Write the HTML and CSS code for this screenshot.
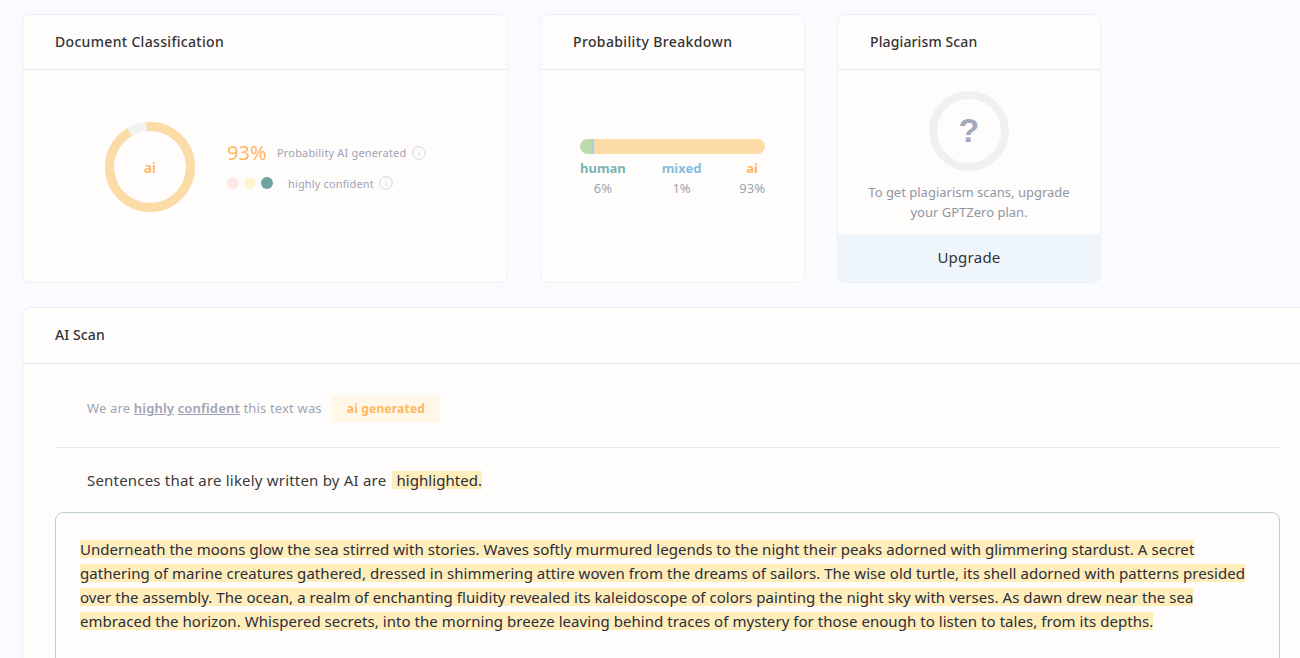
FILE: index.html
```html
<!DOCTYPE html>
<html lang="en">
<head>
<meta charset="utf-8">
<title>GPTZero scan results</title>
<link rel="stylesheet" href="styles.css">
</head>
<body>
<main class="page">
  <section class="top-row">
    <article class="card card-class">
      <h2 class="card-head">Document Classification</h2>
      <div class="class-body">
        <div class="donut">
          <svg width="90" height="90" viewBox="0 0 90 90">
            <circle class="donut-rest" cx="45" cy="45" r="40.5"/>
            <circle class="donut-ai" cx="45" cy="45" r="40.5" pathLength="100" stroke-dasharray="93 7" transform="rotate(-95 45 45)"/>
          </svg>
          <span class="donut-label">ai</span>
        </div>
        <div class="class-info">
          <div class="prob-row">
            <span class="prob-num">93%</span>
            <span class="prob-text">Probability AI generated</span>
            <svg class="info" width="14" height="14" viewBox="0 0 14 14"><circle cx="7" cy="7" r="6.3" /><path d="M7 6.2v4M7 3.6v1.2"/></svg>
          </div>
          <div class="conf-row">
            <span class="dot dot-red"></span>
            <span class="dot dot-yellow"></span>
            <span class="dot dot-green"></span>
            <span class="conf-text">highly confident</span>
            <svg class="info info-conf" width="14" height="14" viewBox="0 0 14 14"><circle cx="7" cy="7" r="6.3" /><path d="M7 6.2v4M7 3.6v1.2"/></svg>
          </div>
        </div>
      </div>
    </article>

    <article class="card card-prob">
      <h2 class="card-head">Probability Breakdown</h2>
      <div class="prob-body">
        <div class="bar">
          <span class="bar-human"></span><span class="bar-mixed"></span><span class="bar-ai"></span>
        </div>
        <div class="legend">
          <div class="legend-col"><b class="c-human">human</b><span>6%</span></div>
          <div class="legend-col legend-mid"><b class="c-mixed">mixed</b><span>1%</span></div>
          <div class="legend-col"><b class="c-ai">ai</b><span>93%</span></div>
        </div>
      </div>
    </article>

    <article class="card card-plag">
      <h2 class="card-head">Plagiarism Scan</h2>
      <div class="plag-body">
        <div class="ring">?</div>
        <p class="plag-text">To get plagiarism scans, upgrade<br>your GPTZero plan.</p>
      </div>
      <div class="upgrade">Upgrade</div>
    </article>
  </section>

  <article class="card card-scan">
    <h2 class="card-head">AI Scan</h2>
    <div class="scan-body">
      <div class="verdict">
        <span class="verdict-text">We are <u>highly</u> <u>confident</u> this text was</span>
        <span class="verdict-tag">ai generated</span>
      </div>
      <div class="legend-line">Sentences that are likely written by AI are <mark class="hl hl-legend">highlighted.</mark></div>
      <div class="doc-box">
        <p class="doc-text"><mark class="hl">Underneath the moons glow the sea stirred with stories. Waves softly murmured legends to the night their peaks adorned with glimmering stardust. A secret<br>gathering of marine creatures gathered, dressed in shimmering attire woven from the dreams of sailors. The wise old turtle, its shell adorned with patterns presided<br>over the assembly. The ocean, a realm of enchanting fluidity revealed its kaleidoscope of colors painting the night sky with verses. As dawn drew near the sea<br>embraced the horizon. Whispered secrets, into the morning breeze leaving behind traces of mystery for those enough to listen to tales, from its depths.</mark></p>
      </div>
    </div>
  </article>
</main>
</body>
</html>
```
FILE: styles.css
```css
* { box-sizing: border-box; }
html, body { margin: 0; height: 100%; }
body {
  height: 658px;
  overflow: hidden;
  background: #f9fbfe;
  font-family: "Noto Sans", "Open Sans", sans-serif;
  color: #333;
}
.page { width: 1322px; height: 658px; overflow: hidden; padding: 14px 0 0 22px; }
.top-row { display: flex; gap: 32px; margin-bottom: 24px; }
.card {
  background: #fffdfc;
  border: 1px solid #eef0f2;
  border-radius: 8px;
  overflow: hidden;
}
.card-class { width: 486px; height: 269px; }
.card-prob { width: 265px; height: 269px; }
.card-plag { width: 264px; height: 269px; display: flex; flex-direction: column; }
.card-scan { width: 1290px; height: 400px; border-right: 0; }
.card-head {
  margin: 0;
  height: 55px;
  padding: 0 32px 2px;
  display: flex;
  align-items: center;
  border-bottom: 1px solid #e8e9eb;
  font-size: 14px;
  font-weight: 500;
  letter-spacing: .32px;
  color: #333;
}
.card-prob .card-head { letter-spacing: .37px; }
.card-plag .card-head { letter-spacing: .12px; }
.card-scan .card-head { height: 56px; letter-spacing: .1px; }

.class-body { display: flex; align-items: center; padding: 52px 0 0 82px; }
.donut { position: relative; width: 90px; height: 90px; flex: none; }
.donut svg { display: block; }
.donut circle { fill: none; stroke-width: 9; }
.donut-rest { stroke: #f1f2f2; }
.donut-ai { stroke: #fcdca6; }
.donut-label {
  position: absolute;
  inset: 0;
  display: flex;
  align-items: center;
  justify-content: center;
  font-size: 14px;
  font-weight: 600;
  color: #fdb75f;
}
.class-info { margin-left: 32px; margin-top: -5px; }
.prob-row, .conf-row { display: flex; align-items: center; }
.prob-num { font-size: 20px; line-height: 28px; color: #fdb75f; width: 50px; }
.prob-text, .conf-text { font-size: 11px; color: #9da3b4; }
.prob-text { letter-spacing: .17px; }
.info { margin-left: 6px; fill: none; stroke: #cfd4d8; stroke-width: 1; }
.info-conf { margin-left: 5px; }
.conf-row { margin-top: 9px; }
.dot { width: 12px; height: 12px; border-radius: 50%; margin-right: 5px; }
.dot-red { background: #fde8e3; }
.dot-yellow { background: #fdf4d0; }
.dot-green { background: #6fa39f; }
.conf-text { margin-left: 10px; letter-spacing: .14px; }

.prob-body { padding: 69px 39px 0 39px; }
.bar { display: flex; height: 15px; border-radius: 8px; overflow: hidden; }
.bar-human { width: 12px; background: #bcdcb0; }
.bar-mixed { width: 2px; background: #a9cfe3; }
.bar-ai { flex: 1; background: #fcdca6; }
.legend { display: flex; justify-content: space-between; margin-top: 4px; }
.legend-col { display: flex; flex-direction: column; align-items: center; font-size: 13px; line-height: 20px; color: #9da3b4; }
.legend-mid { margin-right: 2px; }
.legend-col b { font-weight: 700; }
.c-human { color: #7ab3b3; }
.c-mixed { color: #85bde0; }
.c-ai { color: #fdb75f; }

.plag-body { flex: 1; display: flex; flex-direction: column; align-items: center; padding-top: 21px; }
.ring {
  width: 80px;
  height: 80px;
  padding-bottom: 2px;
  border: 8px solid #f0f0f0;
  border-radius: 50%;
  display: flex;
  align-items: center;
  justify-content: center;
  font-family: "Liberation Sans", sans-serif;
  font-size: 34px;
  font-weight: 700;
  color: #a2a9ba;
}
.plag-text { margin: 11px 0 0; font-size: 13px; line-height: 20px; text-align: center; color: #8f96a3; }
.upgrade {
  height: 48px;
  padding-bottom: 2px;
  background: #eef5fb;
  display: flex;
  align-items: center;
  justify-content: center;
  font-size: 15px;
  letter-spacing: .25px;
  color: #333;
}

.scan-body { padding: 0 32px; }
.verdict {
  height: 84px;
  padding: 5px 0 0 32px;
  display: flex;
  align-items: center;
  border-bottom: 1px solid #e8e9eb;
}
.verdict-text { font-size: 13px; letter-spacing: .17px; color: #9da3b4; }
.verdict-text u { font-weight: 600; }
.verdict-tag {
  margin-left: 10px;
  height: 27px;
  padding: 0 15px;
  display: flex;
  align-items: center;
  background: #fff8e8;
  font-size: 12px;
  font-weight: 700;
  letter-spacing: .2px;
  color: #fdb75f;
}
.legend-line { height: 64px; padding-left: 32px; display: flex; align-items: center; font-size: 15px; letter-spacing: .2px; white-space: pre; color: #3a3a3a; }
.hl {
  background: linear-gradient(#feeebb, #feeebb) 0 50% / 100% 18px no-repeat;
  -webkit-box-decoration-break: clone;
  box-decoration-break: clone;
  color: #2c2c3a;
}
.hl-legend { padding-left: 4px; margin-left: 2px; letter-spacing: .06px; }
.doc-box {
  height: 200px;
  padding: 24px;
  border: 1px solid #bfd0cc;
  border-radius: 8px;
}
.doc-text { margin: 0; font-size: 15px; letter-spacing: .05px; line-height: 24px; white-space: nowrap; }
```
